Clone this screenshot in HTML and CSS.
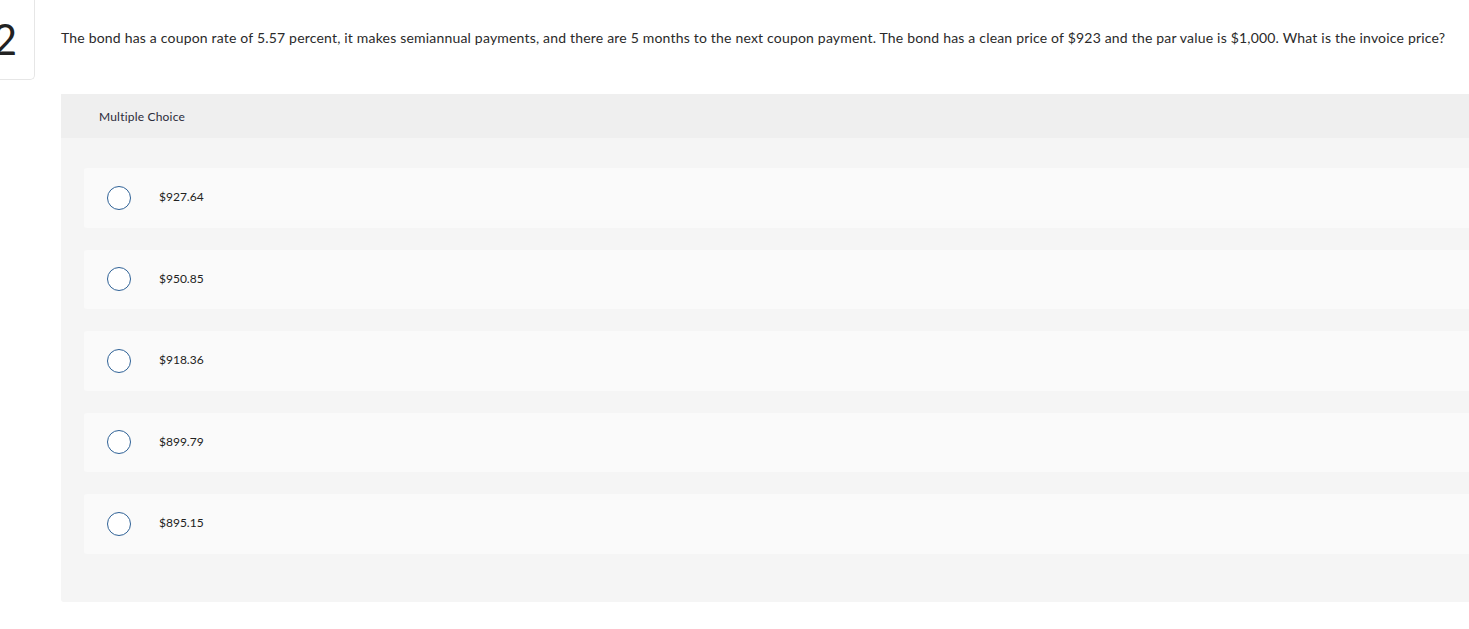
FILE: index.html
```html
<!DOCTYPE html>
<html>
<head>
<meta charset="utf-8">
<link rel="stylesheet" href="styles.css">
</head>
<body>
<div class="page">
  <div class="num-col">
    <div class="num-box"><span class="num">2</span></div>
  </div>
  <div class="main">
    <p class="question">The bond has a coupon rate of 5.57 percent, it makes semiannual payments, and there are 5 months to the next coupon payment. The bond has a clean price of $923 and the par value is $1,000. What is the invoice price?</p>
    <div class="panel">
      <div class="panel-head">Multiple Choice</div>
      <div class="options">
        <div class="option"><span class="radio"></span><span class="label">$927.64</span></div>
        <div class="option"><span class="radio"></span><span class="label">$950.85</span></div>
        <div class="option"><span class="radio"></span><span class="label">$918.36</span></div>
        <div class="option"><span class="radio"></span><span class="label">$899.79</span></div>
        <div class="option"><span class="radio"></span><span class="label">$895.15</span></div>
      </div>
    </div>
  </div>
</div>
</body>
</html>
```
FILE: styles.css
```css
html, body {
  margin: 0;
  padding: 0;
  background: #ffffff;
  font-family: "Lato", "Liberation Sans", sans-serif;
  color: #333333;
  overflow: hidden;
}
.page {
  display: flex;
  width: 1469px;
}
.num-col {
  width: 61px;
  flex: none;
}
.num-box {
  width: 55px;
  height: 80px;
  margin-left: -20px;
  box-sizing: border-box;
  border: 1px solid #e6e6e6;
  border-top: none;
  border-radius: 0 0 5px 5px;
  display: flex;
  justify-content: flex-end;
  padding-right: 17px;
  padding-top: 18px;
}
.num {
  font-size: 42px;
  line-height: 42px;
  color: #222;
  font-weight: 400;
}
.main {
  flex: 1;
  min-width: 0;
}
.question {
  margin: 0;
  padding-top: 29px;
  height: 94px;
  box-sizing: border-box;
  font-size: 14px;
  line-height: 18px;
  white-space: nowrap;
  letter-spacing: 0.19px;
  color: #2a2a2a;
}
.panel {
  background: #f5f5f5;
  border-radius: 3px 0 0 3px;
  height: 508px;
}
.panel-head {
  background: #efefef;
  height: 44px;
  box-sizing: border-box;
  padding-left: 38px;
  display: flex;
  align-items: center;
  font-size: 12px;
  letter-spacing: 0.2px;
  color: #2b2b3a;
}
.options {
  padding: 30px 0 0 23px;
  display: flex;
  flex-direction: column;
  gap: 22px;
}
.option {
  background: #fafafa;
  border-radius: 3px 0 0 3px;
  height: 59.5px;
  display: flex;
  align-items: center;
  padding-left: 23px;
}
.radio {
  width: 24px;
  height: 24px;
  box-sizing: border-box;
  border: 1.5px solid #2e6196;
  border-radius: 50%;
  background: #ffffff;
  flex: none;
}
.label {
  margin-left: 28px;
  margin-top: -2px;
  font-size: 12px;
  color: #222;
}
```
